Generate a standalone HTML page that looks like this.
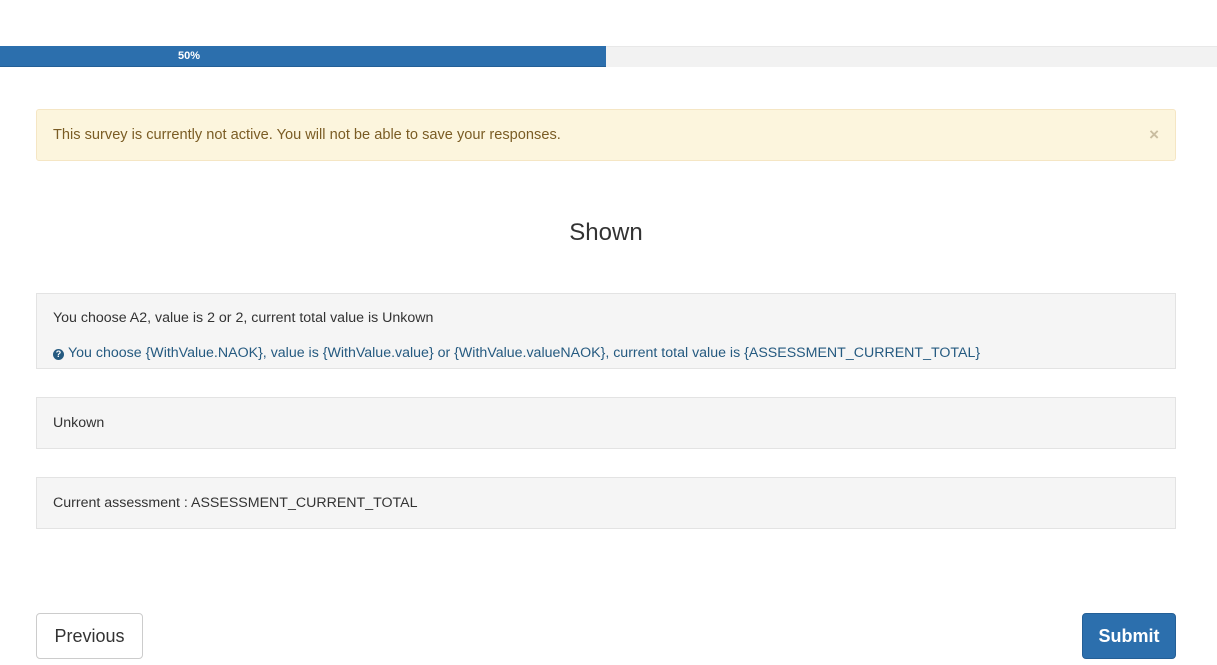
<!DOCTYPE html>
<html><head><style>
body{margin:0;width:1217px;height:665px;background:#fff;font-family:"Liberation Sans",sans-serif;position:relative;overflow:hidden;color:#333}
.abs{position:absolute}
.bar{left:0;top:46px;width:1217px;height:21px;background:#f2f2f2;border-top:1px solid #e8e8e8;box-sizing:border-box}
.fill{left:0;top:46px;width:606px;height:21px;background:#2c6fad;border-bottom:1px solid #245f96;box-sizing:border-box}
.lbl{left:178px;top:46px;line-height:21px;color:#fff;font-size:11px;font-weight:bold}
.alert{left:36px;top:109px;width:1140px;height:52px;background:#fcf5dd;border:1px solid #f5e6c4;border-radius:3px;box-sizing:border-box;color:#7a5c24;font-size:14.6px;line-height:50px;padding-left:16px}
.x{right:16px;top:0;color:#c9bda0;font-size:17px;font-weight:bold}
h1{position:absolute;left:0;width:1212px;top:219px;margin:0;text-align:center;font-weight:normal;font-size:24px;color:#333}
.box{left:36px;width:1140px;background:#f5f5f5;border:1px solid #e3e3e3;box-sizing:border-box;font-size:14.2px;padding-left:16px}
.help{color:#255a80}
.q{display:inline-block;width:11px;height:11px;border-radius:50%;background:#255a80;color:#fff;font-size:9px;font-weight:bold;text-align:center;line-height:11px;vertical-align:0px;margin-right:4px}
.btn{top:613px;height:46px;box-sizing:border-box;border-radius:4px;font-size:18px;line-height:44px;text-align:center}
</style></head><body>
<div class="abs bar"></div>
<div class="abs fill"></div>
<div class="abs lbl">50%</div>
<div class="abs alert">This survey is currently not active. You will not be able to save your responses.<span class="abs x">×</span></div>
<h1>Shown</h1>
<div class="abs box" style="top:293px;height:76px">
<div style="position:absolute;top:16px">You choose A2, value is 2 or 2, current total value is Unkown</div>
<div class="help" style="position:absolute;top:51px"><span class="q">?</span>You choose {WithValue.NAOK}, value is {WithValue.value} or {WithValue.valueNAOK}, current total value is {ASSESSMENT_CURRENT_TOTAL}</div>
</div>
<div class="abs box" style="top:397px;height:52px;line-height:50px">Unkown</div>
<div class="abs box" style="top:477px;height:52px;line-height:50px">Current assessment : ASSESSMENT_CURRENT_TOTAL</div>
<div class="abs btn" style="left:36px;width:107px;border:1px solid #ccc;color:#333;background:#fff">Previous</div>
<div class="abs btn" style="left:1082px;width:94px;background:#2c6fad;border:1px solid #245f96;color:#fff;font-weight:bold">Submit</div>
</body></html>
